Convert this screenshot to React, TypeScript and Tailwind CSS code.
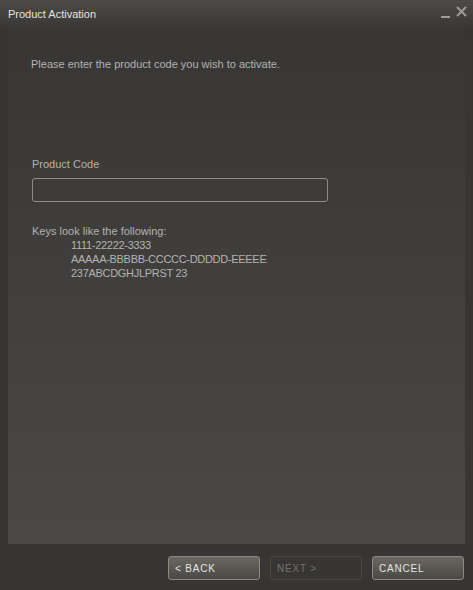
const KEY_EXAMPLES = [
  "1111-22222-3333",
  "AAAAA-BBBBB-CCCCC-DDDDD-EEEEE",
  "237ABCDGHJLPRST 23",
];

function WindowButton({
  label,
  disabled,
}: {
  label: string;
  disabled?: boolean;
}) {
  return (
    <button
      type="button"
      disabled={disabled}
      className={`flex h-[24px] w-[92px] items-center rounded-[3px] border px-[6px] text-left text-[10px] tracking-[0.08em] ${
        disabled
          ? "border-[#4a4845] bg-transparent text-[#75726d]"
          : "border-[#8c8882] bg-gradient-to-b from-[#6b6863] to-[#4b4945] text-[#e6e4e0]"
      }`}
    >
      {label}
    </button>
  );
}

export default function App() {
  return (
    <div className="flex h-[590px] w-[473px] flex-col bg-[#373634] font-['Liberation_Sans',Arial,sans-serif]">
      <div className="flex h-[28px] items-start justify-between bg-gradient-to-b from-[#4d4b49] to-[#393836] pl-[8px] pr-[6px] pt-[7px]">
        <span className="text-[11px] leading-[14px] text-[#e4e2de]">Product Activation</span>
        <div className="flex items-start gap-[5px] text-[#9f9c97]">
          <svg width="10" height="12" viewBox="0 0 10 12">
            <rect x="0" y="9" width="9" height="2" fill="currentColor" />
          </svg>
          <svg width="11" height="11" viewBox="0 0 11 11" className="-mt-[1px]">
            <path d="M1 1 L10 10 M10 1 L1 10" stroke="currentColor" strokeWidth="2" />
          </svg>
        </div>
      </div>

      <div className="mx-[8px] flex h-[516px] flex-col bg-gradient-to-b from-[#373634] to-[#4a4947] px-[23px]">
        <p className="mt-[29px] text-[11px] leading-[14px] text-[#b4b2ae]">
          Please enter the product code you wish to activate.
        </p>

        <label
          htmlFor="product-code"
          className="ml-[1px] mt-[86px] text-[11px] leading-[14px] text-[#b4b2ae]"
        >
          Product Code
        </label>
        <input
          id="product-code"
          type="text"
          className="ml-[1px] mt-[7px] h-[24px] w-[296px] rounded-[3px] border border-[#8f8b85] bg-transparent px-2 text-[11px] text-[#e4e2de] outline-none"
        />

        <p className="ml-[1px] mt-[22px] text-[11px] leading-[14px] text-[#b4b2ae]">
          Keys look like the following:
        </p>
        <ul className="ml-[40px] text-[11px] leading-[14px] tracking-[-0.3px] text-[#b4b2ae]">
          {KEY_EXAMPLES.map((key) => (
            <li key={key}>{key}</li>
          ))}
        </ul>
      </div>

      <div className="flex justify-end gap-[10px] pr-[9px] pt-[12px]">
        <WindowButton label="< BACK" />
        <WindowButton label="NEXT >" disabled />
        <WindowButton label="CANCEL" />
      </div>
    </div>
  );
}
